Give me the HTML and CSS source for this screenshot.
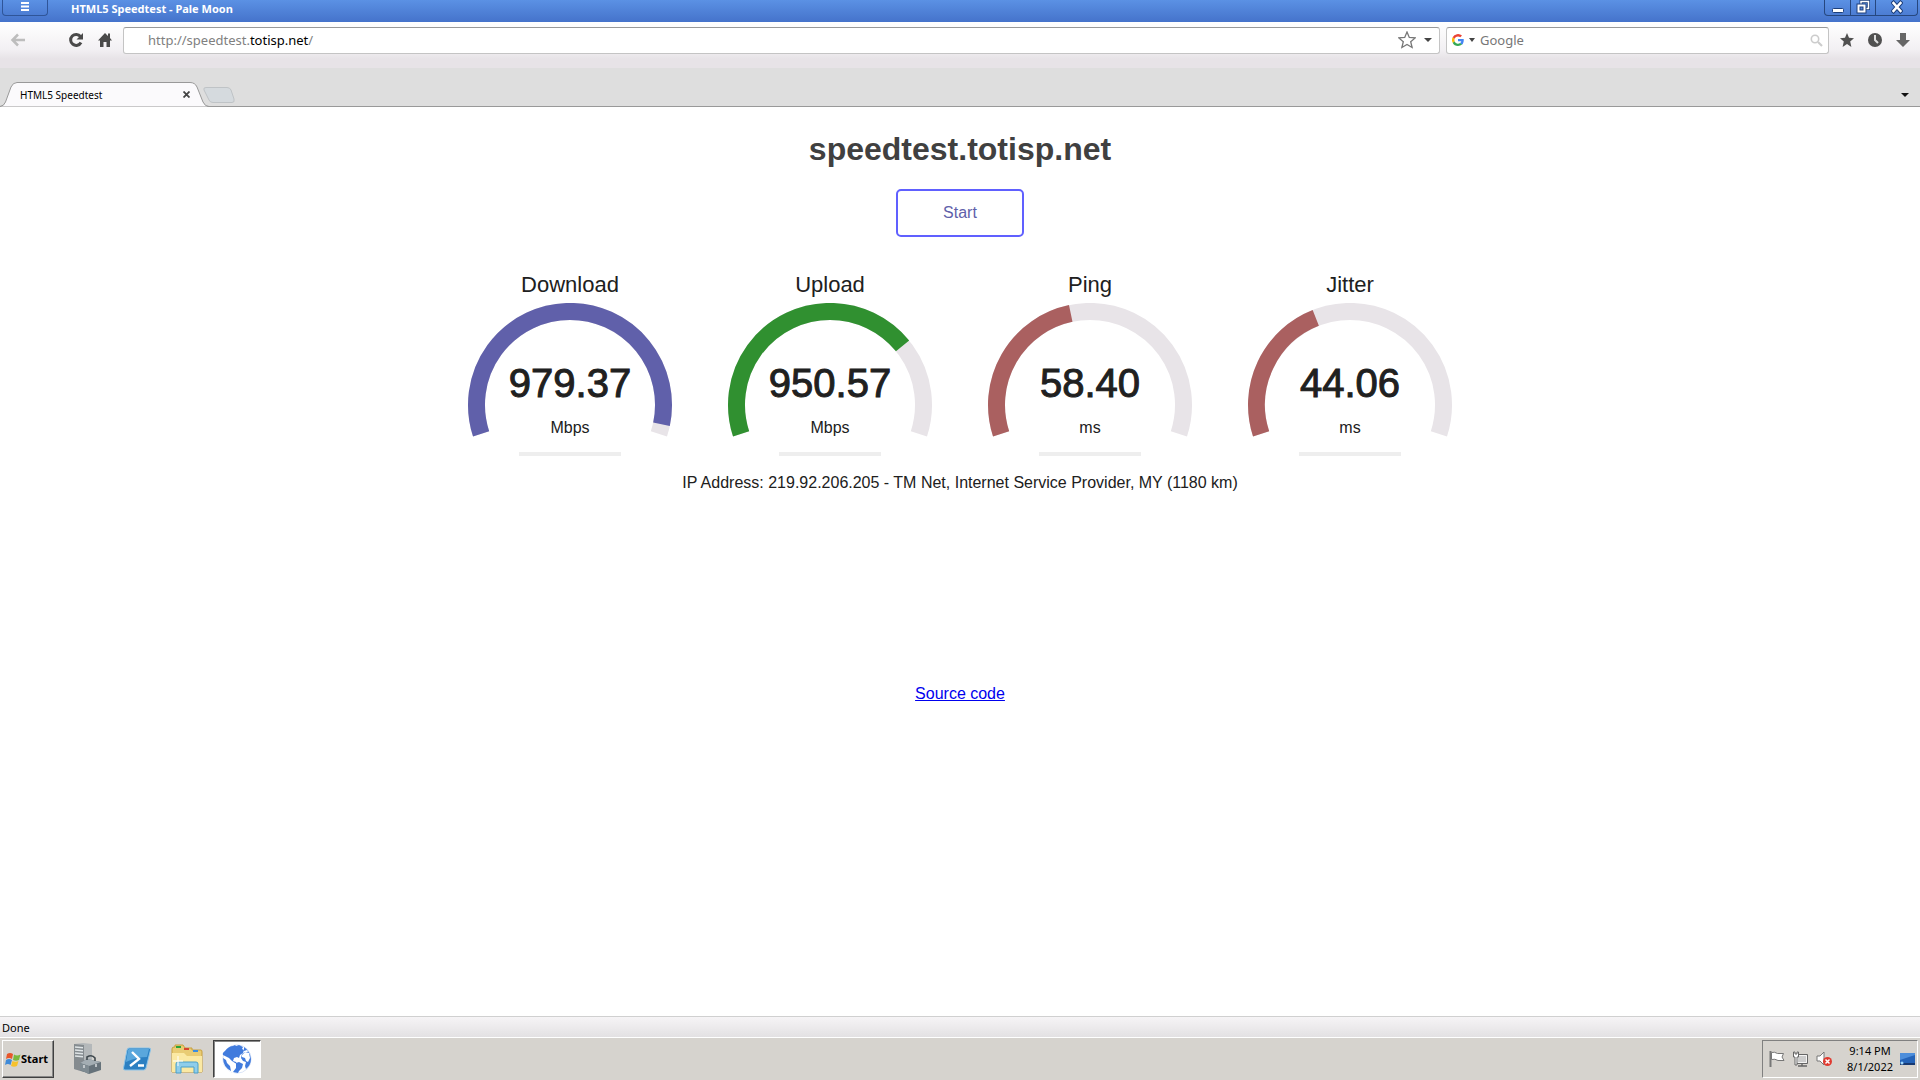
FILE: index.html
```html
<!DOCTYPE html>
<html lang="en">
<head>
<meta charset="utf-8">
<title>HTML5 Speedtest</title>
<link rel="stylesheet" href="styles.css">
</head>
<body>
<header class="titlebar">
  <button class="app-menu" type="button" aria-label="Menu">
    <svg width="8" height="9" viewBox="0 0 8 9"><path d="M0 1h8M0 4.500h8M0 8h8" stroke="#fff" stroke-width="2"/></svg>
  </button>
  <span class="window-title">HTML5 Speedtest - Pale Moon</span>
  <div class="window-buttons">
    <button type="button" aria-label="Minimize"><svg width="12" height="14" viewBox="0 0 12 14"><rect x=".5" y="8.500" width="11" height="4" rx="1" fill="#fff" stroke="#1c3f7c"/></svg></button>
    <button type="button" aria-label="Restore"><svg width="14" height="14" viewBox="0 0 14 14"><path d="M5 4V1.500h7.500v7H10" fill="none" stroke="#1c3f7c" stroke-width="3"/><path d="M5 4V1.500h7.500v7H10" fill="none" stroke="#fff" stroke-width="1.500"/><rect x="1" y="4" width="9" height="9" fill="#fff" stroke="#1c3f7c"/><rect x="4" y="7" width="3" height="3" fill="#5a86d8" stroke="#1c3f7c"/></svg></button>
    <button class="close" type="button" aria-label="Close"><svg width="12" height="14" viewBox="0 0 12 14"><path d="M2.500 3l7 8M9.500 3l-7 8" stroke="#1c3f7c" stroke-width="4.500" stroke-linecap="square"/><path d="M2.500 3l7 8M9.500 3l-7 8" stroke="#fff" stroke-width="2.500" stroke-linecap="square"/></svg></button>
  </div>
</header>

<nav class="toolbar">
  <button class="icon back" type="button" aria-label="Back"><svg width="16" height="14" viewBox="0 0 16 14"><path d="M15 7H3M8 1.500L2.500 7 8 12.500" fill="none" stroke="#bdbdbd" stroke-width="2.500"/></svg></button>
  <button class="icon reload" type="button" aria-label="Reload"><svg width="16" height="16" viewBox="0 0 16 16"><path d="M12.500 4.500A5.500 5.500 0 1 0 13 10.500" fill="none" stroke="#4a4a4a" stroke-width="3"/><path d="M15 1v6.500H8.500z" fill="#4a4a4a"/></svg></button>
  <button class="icon home" type="button" aria-label="Home"><svg width="14" height="16" viewBox="0 0 14 16"><path d="M7 1L0 8.500h2V15h3.500v-5h3v5H12V8.500h2L12 6V1.500h-2V4z" fill="#4a4a4a"/></svg></button>
  <form class="field address">
    <a class="url" href="#">http://speedtest.<b>totisp.net</b>/</a>
    <button class="icon" type="button" aria-label="Bookmark"><svg width="18" height="18" viewBox="0 0 18 18"><path d="M9 1l2.300 5.400 5.900.5-4.500 3.800 1.400 5.800L9 13.400l-5.100 3.100 1.400-5.800L.8 6.900l5.900-.5z" fill="#fff" stroke="#777" stroke-width="1.300"/></svg></button>
    <button class="icon" type="button" aria-label="History"><svg width="8" height="4" viewBox="0 0 8 4"><path d="M0 0h8L4 4z" fill="#444"/></svg></button>
  </form>
  <form class="field search">
    <svg width="12" height="12" viewBox="0 0 24 24"><path fill="#4285f4" d="M23.500 12.300c0-.9-.1-1.500-.2-2.300H12v4.600h6.600a5.700 5.700 0 0 1-2.500 3.700l3.900 3.100c2.300-2.200 3.500-5.300 3.500-9.100z"/><path fill="#34a853" d="M12 24c3.200 0 6-1.100 8-2.900l-3.900-3a7.200 7.200 0 0 1-10.800-3.800l-4 3.100A12 12 0 0 0 12 24z"/><path fill="#fbbc05" d="M5.300 14.300a7.400 7.400 0 0 1 0-4.600l-4-3.100a12 12 0 0 0 0 10.800z"/><path fill="#ea4335" d="M12 4.800c1.800 0 3.300.6 4.600 1.800L20 3.200A12 12 0 0 0 1.300 6.600l4 3.100A7.100 7.100 0 0 1 12 4.800z"/></svg>
    <svg width="6" height="4" viewBox="0 0 6 4"><path d="M0 0h6L3 4z" fill="#444"/></svg>
    <input type="search" placeholder="Google" aria-label="Search with Google">
    <svg width="13" height="13" viewBox="0 0 13 13"><circle cx="5" cy="5" r="3.700" fill="none" stroke="#ccc" stroke-width="1.600"/><path d="M8 8l4 4" stroke="#ccc" stroke-width="2.200"/></svg>
  </form>
  <button class="icon" type="button" aria-label="Bookmarks"><svg width="14" height="14" viewBox="0 0 14 14"><path d="M7 0l2 4.800 5 .4-3.800 3.300L11.400 14 7 11l-4.400 3 1.200-5.500L0 5.200l5-.4z" fill="#505050"/></svg></button>
  <button class="icon" type="button" aria-label="Recent"><svg width="14" height="14" viewBox="0 0 14 14"><circle cx="7" cy="7" r="7" fill="#505050"/><path d="M7 2v5l3 3" fill="none" stroke="#ddd" stroke-width="2"/></svg></button>
  <button class="icon" type="button" aria-label="Downloads"><svg width="14" height="14" viewBox="0 0 14 14"><path d="M4 0h6v7h4l-7 7-7-7h4z" fill="#666"/></svg></button>
</nav>

<div class="tabstrip">
  <div class="tab">
    <svg class="tab-shape" width="240" height="25" viewBox="0 0 240 25"><path d="M0 24.500Q4 24 5.500 20L11 5Q13 .5 17 .5H190Q195 .5 197 5L203 20Q205 24.500 209 24.500" fill="#fbfafc" stroke="#999"/><path d="M206 5.500H227Q230 5.500 231 8L234 17Q235 20.500 232 20.500H213Q210 20.500 209 18L204 8Q203 5.500 206 5.500z" fill="#d5dade" stroke="#bfc3c6"/></svg>
    <span class="tab-title">HTML5 Speedtest</span>
    <button class="icon" type="button" aria-label="Close tab"><svg width="7" height="7" viewBox="0 0 7 7"><path d="M.5.5l6 6M6.500.5l-6 6" stroke="#444" stroke-width="1.800"/></svg></button>
  </div>
  <button class="icon all-tabs" type="button" aria-label="List all tabs"><svg width="8" height="4" viewBox="0 0 8 4"><path d="M0 0h8L4 4z" fill="#111"/></svg></button>
</div>

<main class="page">
  <h1>speedtest.totisp.net</h1>
  <button class="start-test" type="button">Start</button>
  <section class="gauges">
    <article class="gauge download">
      <h2>Download</h2>
      <div class="dial">
        <svg viewBox="0 0 206 134"><path class="track" d="M14.100 130.900A93.500 93.500 0 1 1 191.900 130.900"/><path class="value" pathLength="216" stroke-dasharray="209.700 216" d="M14.100 130.900A93.500 93.500 0 1 1 191.900 130.900"/></svg>
        <div class="reading"><strong>979.37</strong><span>Mbps</span></div>
      </div>
      <div class="bar"></div>
    </article>
    <article class="gauge upload">
      <h2>Upload</h2>
      <div class="dial">
        <svg viewBox="0 0 206 134"><path class="track" d="M14.100 130.900A93.500 93.500 0 1 1 191.900 130.900"/><path class="value" pathLength="216" stroke-dasharray="158.900 216" d="M14.100 130.900A93.500 93.500 0 1 1 191.900 130.900"/></svg>
        <div class="reading"><strong>950.57</strong><span>Mbps</span></div>
      </div>
      <div class="bar"></div>
    </article>
    <article class="gauge ping">
      <h2>Ping</h2>
      <div class="dial">
        <svg viewBox="0 0 206 134"><path class="track" d="M14.100 130.900A93.500 93.500 0 1 1 191.900 130.900"/><path class="value" pathLength="216" stroke-dasharray="96.100 216" d="M14.100 130.900A93.500 93.500 0 1 1 191.900 130.900"/></svg>
        <div class="reading"><strong>58.40</strong><span>ms</span></div>
      </div>
      <div class="bar"></div>
    </article>
    <article class="gauge jitter">
      <h2>Jitter</h2>
      <div class="dial">
        <svg viewBox="0 0 206 134"><path class="track" d="M14.100 130.900A93.500 93.500 0 1 1 191.900 130.900"/><path class="value" pathLength="216" stroke-dasharray="86.500 216" d="M14.100 130.900A93.500 93.500 0 1 1 191.900 130.900"/></svg>
        <div class="reading"><strong>44.06</strong><span>ms</span></div>
      </div>
      <div class="bar"></div>
    </article>
  </section>
  <p class="ip">IP Address: 219.92.206.205 - TM Net, Internet Service Provider, MY (1180 km)</p>
  <a class="source" href="#">Source code</a>
</main>

<div class="status">Done</div>

<footer class="taskbar">
  <button class="start-menu" type="button">
    <svg width="16" height="15" viewBox="0 0 16 15"><path d="M2 2q3-2 6 0L7 7Q4 5 1 7z" fill="#e8562a"/><path d="M9 2.500q3 2 6.500 0L14 8q-3 1.500-6 0z" fill="#7ab83c"/><path d="M1 8q3-2 6 0l-1.500 5Q3 11 0 13z" fill="#3f8ad8"/><path d="M7.500 9q3 1.500 6 0L12 14q-3 1.500-6 0z" fill="#f6c22c"/></svg>Start
  </button>
  <button class="task" type="button" aria-label="Server Manager"><svg width="32" height="32" viewBox="0 0 32 32"><path d="M3 1l9-1 9 1v26l-8 2-10-3z" fill="#b4b8ba"/><path d="M3 1l10 1v27L3 26z" fill="#858b8f"/><path d="M4 4l8 .7M4 7l8 .7M4 10l8 .7M4 13l8 .7" stroke="#dfe4e6" stroke-width="1.400"/><path d="M9 20l7-4 14 3v8l-12 4-9-4z" fill="#66727a"/><path d="M9 20l7-4 14 3-12 4z" fill="#a3adb3"/><path d="M9 20l9 3v8l-9-4z" fill="#7f8b92"/><path d="M16 17v-3q5-3 8 1v3" fill="none" stroke="#3f484d" stroke-width="1.600"/><path d="M13 22v3M25 21v3" stroke="#d8dcde" stroke-width="1.500"/></svg></button>
  <button class="task" type="button" aria-label="PowerShell"><svg width="28" height="24" viewBox="0 0 28 24"><path d="M6 1h20q2 0 1.500 2l-4.500 18q-.5 2-2.500 2H2q-2 0-1.500-2L4 3q.5-2 2-2z" fill="#2c80c2" stroke="#8cc4e8"/><path d="M6 2h20l-2 8Q14 10 3 15L5 3z" fill="#5aa7dc"/><path d="M9 5l7 7-9 7M15 18.500h6" fill="none" stroke="#fff" stroke-width="2.400"/></svg></button>
  <button class="task" type="button" aria-label="Explorer"><svg width="32" height="30" viewBox="0 0 32 30"><path d="M1 5q0-2 2-2h1V1h8l2 3h7v2h9q1 0 1 2v20H1z" fill="#e9cc74" stroke="#c79f3c"/><path d="M5 2h5v2H5z" fill="#2aa33a"/><path d="M13 4h5v2h-5z" fill="#d8442e"/><path d="M22 6h5v2h-5z" fill="#3a8ee0"/><path d="M1 9h12l3 3h15v16H1z" fill="#fbe9a3"/><path d="M5 29V20q0-2 2-2h18q2 0 2 2v9h-4v-6H10v6z" fill="#8fcdea" stroke="#4b9fc9"/><path d="M7 12v10M2 17h10" stroke="#fff"/></svg></button>
  <button class="task active" type="button" aria-label="Pale Moon"><svg width="30" height="30" viewBox="0 0 30 30"><circle cx="15" cy="15" r="14.200" fill="#fff" stroke="#dbe5f8"/><path d="M3 7Q7 2 11 2l2-1 1 1 3-1 4 2-1 2 2 1-1 3-3 2-1 3-2-1-3 1-1 3 3 1 1 2-2-1-3-2-3-3-4-2-2-1Q0 9 3 7z" fill="#417bdd"/><path d="M1 15l3 1 4 2 5 2 2 3-1 3-3 3Q1 25 1 15z" fill="#fff"/><path d="M1 14l3 2 1 3 3 3 1 5Q1 23 1 14zM14 19l3-1 4 2-1 4-3 3-1 2-5-1 3-4z" fill="#417bdd"/><path d="M22 3q6 4 7 12 0 6-5 10l-1-3 1-4-3-1-2-3 1-4 3-2h3l-1-2-3 1z" fill="#417bdd"/><path d="M20 11l3-3 4 1 1 5-2 4-2-1-1-3-3-1z" fill="#fff"/></svg></button>
  <div class="tray">
    <svg width="16" height="18" viewBox="0 0 16 18"><path d="M1.500 1v16" stroke="#777" stroke-width="2"/><path d="M2.500 2.500q3-1 6 1h6L13 7l2 3.500H9q-3-2-6.500-1z" fill="#fff" stroke="#777"/></svg>
    <svg width="17" height="16" viewBox="0 0 17 16"><path d="M4.500 3.500h11v9h-11z" fill="#ccc" stroke="#666"/><path d="M5.500 4.500h9v7h-9z" fill="none" stroke="#f4f4f4"/><path d="M6 15h9M10 12v3" stroke="#666" stroke-width="1.400"/><path d="M1.500 1v5h1.500v8h2V6h1.500V1h-1.500v2h-2V1z" fill="#fff" stroke="#666"/></svg>
    <svg width="17" height="16" viewBox="0 0 17 16"><path d="M1 5h3l4-4v13l-4-4H1z" fill="#fff" stroke="#777"/><circle cx="11.500" cy="10.500" r="4.500" fill="#e03a30"/><path d="M9.500 8.500l4 4M13.500 8.500l-4 4" stroke="#fff" stroke-width="1.500"/></svg>
    <time class="clock"><span>9:14 PM</span><span>8/1/2022</span></time>
    <svg width="15" height="12" viewBox="0 0 15 12"><path d="M0 0h15v12H0z" fill="#2463b8"/><path d="M0 0h15v2L0 7z" fill="#4d8edb"/><path d="M0 10h15v2H0z" fill="#183a72"/><circle cx="2" cy="10" r="1.500" fill="#9fd8ff"/></svg>
  </div>
</footer>
</body>
</html>
```
FILE: styles.css
```css
* { box-sizing: border-box; }

body {
  margin: 0;
  min-height: 100vh;
  display: flex;
  flex-direction: column;
  background: #fff;
  color: #202020;
  font: 16px/20px "Liberation Sans", Arial, sans-serif;
}

button {
  margin: 0;
  padding: 0;
  border: 0;
  background: none;
  font: inherit;
  color: inherit;
}

svg { display: block; flex: none; }

.icon { display: flex; align-items: center; justify-content: center; }

/* Window title bar */
.titlebar {
  display: flex;
  align-items: flex-start;
  height: 22px;
  padding: 0 2px;
  background: linear-gradient(#5b91e4, #4573cb);
}

.app-menu {
  display: flex;
  justify-content: center;
  width: 46px;
  height: 16px;
  padding-top: 2px;
  border: 1px solid #2f5599;
  border-top: 0;
  border-radius: 0 0 4px 4px;
}

.window-title {
  flex: 1;
  padding-left: 23px;
  color: #fff;
  font: bold 11px/18px "Noto Sans", sans-serif;
}

.window-buttons { display: flex; height: 16px; border: 1px solid #26477f; border-top: 0; border-radius: 0 0 4px 4px; }
.window-buttons button { display: flex; justify-content: center; width: 25px; }
.window-buttons button + button { border-left: 1px solid #26477f; }
.window-buttons .close { width: 42px; }

/* Navigation toolbar */
.toolbar {
  display: flex;
  align-items: center;
  gap: 14px;
  height: 46px;
  padding: 0 10px 10px;
  background: linear-gradient(#fff, #f2f0f3 60%, #e7e3e7 80%);
}

.toolbar .back { margin-right: 28px; }
.field {
  display: flex;
  align-items: center;
  height: 27px;
  background: #fff;
  border: 1px solid #c4c4c4;
  border-top-color: #999;
  border-radius: 3px;
  font: 13px/20px "Noto Sans", sans-serif;
}
.address { flex: 1; gap: 8px; padding: 0 7px 0 24px; margin: 0 -8px 0 -3px; }
.url { flex: 1; color: #808080; text-decoration: none; }
.url b { color: #000; font-weight: 400; }
.search { width: 383px; gap: 5px; padding: 0 5px; margin-right: -3px; }
.search input { flex: 1; min-width: 0; padding: 0; border: 0; outline: 0; background: none; font: inherit; }
.search input::placeholder { color: #777; }

/* Tabs */
.tabstrip {
  display: flex;
  justify-content: space-between;
  height: 39px;
  padding-top: 14px;
  background: #dedede;
  border-bottom: 1px solid #999;
}
.tab { position: relative; display: flex; align-items: center; justify-content: space-between; width: 190px; height: 25px; padding-left: 20px; }
.tab-shape { position: absolute; left: 0; top: 0; }
.tab-title { position: relative; color: #000; font: 10px/16px "Noto Sans", sans-serif; }
.tab .icon { position: relative; }
.all-tabs { padding: 2px 11px 0 0; }

/* Page */
.page { flex: 1; display: flex; flex-direction: column; align-items: center; }
h1 { margin: 24px 0 21px; color: #404040; font-size: 32px; line-height: 37px; }
.start-test {
  width: 128px;
  height: 48px;
  border: 2px solid #6060ff;
  border-radius: 5px;
  color: #6060aa;
}
.gauges { display: flex; justify-content: center; flex-wrap: wrap; margin-top: 35px; }
.gauge { display: flex; flex-direction: column; align-items: center; width: 260px; }
.gauge h2 { margin: 0; font-size: 22px; font-weight: 400; line-height: 26px; }
.dial { display: grid; width: 206px; margin-top: 5px; }
.dial > * { grid-area: 1 / 1; }
.dial path { fill: none; stroke-width: 17px; }
.dial .track { stroke: #e8e4e8; }
.download .value { stroke: #6060aa; }
.upload .value { stroke: #309030; }
.ping .value, .jitter .value { stroke: #aa6060; }
.reading { display: flex; flex-direction: column; align-items: center; align-self: end; margin-bottom: -1px; }
.reading strong { font-size: 40px; font-weight: 400; line-height: 46px; -webkit-text-stroke: 1px #202020; }
.reading span { margin-top: 12px; }
.bar { width: 102px; height: 4px; margin-top: 15px; background: #eee; }
.ip { margin: 17px 0 0; }
.source { margin-top: 191px; color: #0000ee; }

/* Browser status bar */
.status {
  height: 21px;
  padding-left: 2px;
  background: linear-gradient(#f6f4f6, #e3e1e3);
  border-top: 1px solid #d0d0d0;
  color: #000;
  font: 11px/22px "Noto Sans", sans-serif;
}

/* Taskbar */
.taskbar {
  display: flex;
  align-items: center;
  height: 43px;
  padding: 1px 2px;
  background: #d6d3ce;
  border-top: 1px solid #fff;
  color: #000;
}
.start-menu {
  display: flex;
  align-items: center;
  width: 52px;
  height: 38px;
  margin-right: 9px;
  padding-left: 2px;
  border: 1px solid;
  border-color: #fff #404040 #404040 #fff;
  box-shadow: inset -1px -1px #888;
  font: bold 11px/16px "Noto Sans", sans-serif;
}
.task { display: flex; align-items: center; justify-content: center; width: 48px; height: 38px; margin-right: 2px; }
.task.active { border: 1px solid; border-color: #404040 #fff #fff #404040; box-shadow: inset 1px 1px #888; background: #fff; }
.tray {
  display: flex;
  align-items: center;
  gap: 7px;
  height: 38px;
  margin-left: auto;
  padding: 0 2px 0 6px;
  border: 1px solid;
  border-color: #808080 #fff #fff #808080;
}
.clock { display: flex; flex-direction: column; align-items: center; margin-left: 7px; font: 11px/16px "Noto Sans", sans-serif; }
```
